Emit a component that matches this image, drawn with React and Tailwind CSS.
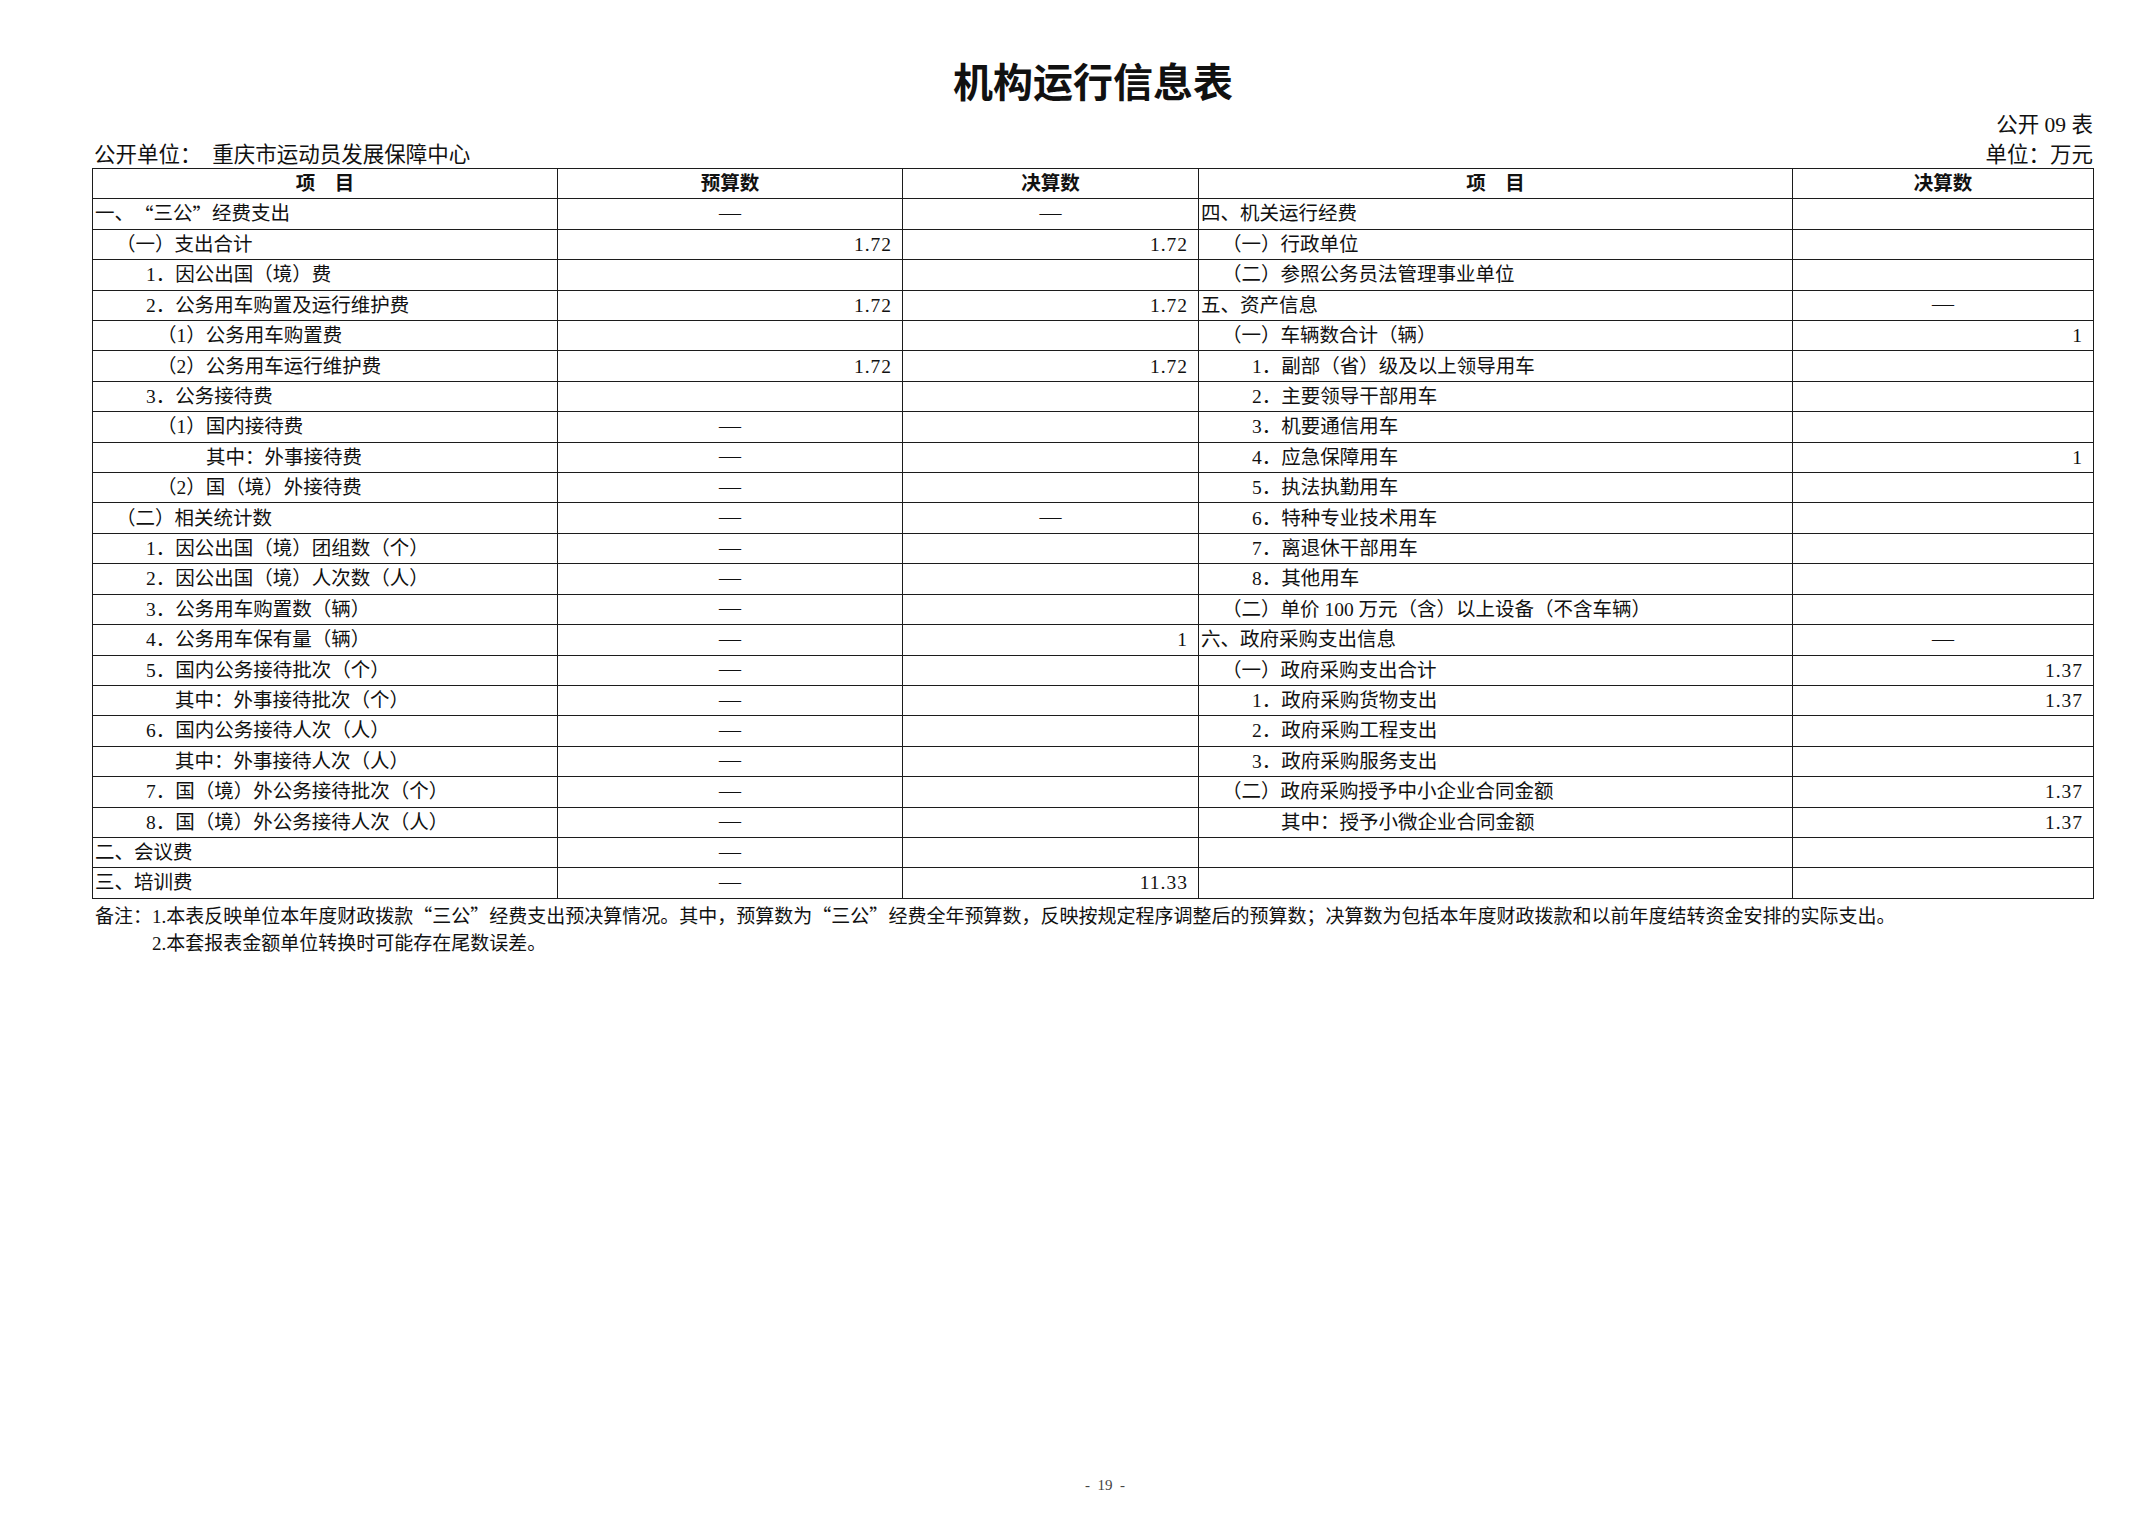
import React from 'react';

// 机构运行信息表 — 公开09表
const cjk = "font-['Noto_Sans_CJK_SC',sans-serif]";

const indents = ['pl-[2px]', 'pl-[23px]', 'pl-[53px]', 'pl-[64px]', 'pl-[113px]', 'pl-[82px]'];

const leftRows = [
  ['一、“三公”经费支出', 0, '—', '—'],
  ['（一）支出合计', 1, '1.72', '1.72'],
  ['1．因公出国（境）费', 2, '', ''],
  ['2．公务用车购置及运行维护费', 2, '1.72', '1.72'],
  ['（1）公务用车购置费', 3, '', ''],
  ['（2）公务用车运行维护费', 3, '1.72', '1.72'],
  ['3．公务接待费', 2, '', ''],
  ['（1）国内接待费', 3, '—', ''],
  ['其中：外事接待费', 4, '—', ''],
  ['（2）国（境）外接待费', 3, '—', ''],
  ['（二）相关统计数', 1, '—', '—'],
  ['1．因公出国（境）团组数（个）', 2, '—', ''],
  ['2．因公出国（境）人次数（人）', 2, '—', ''],
  ['3．公务用车购置数（辆）', 2, '—', ''],
  ['4．公务用车保有量（辆）', 2, '—', '1'],
  ['5．国内公务接待批次（个）', 2, '—', ''],
  ['其中：外事接待批次（个）', 5, '—', ''],
  ['6．国内公务接待人次（人）', 2, '—', ''],
  ['其中：外事接待人次（人）', 5, '—', ''],
  ['7．国（境）外公务接待批次（个）', 2, '—', ''],
  ['8．国（境）外公务接待人次（人）', 2, '—', ''],
  ['二、会议费', 0, '—', ''],
  ['三、培训费', 0, '—', '11.33'],
];

const rightRows = [
  ['四、机关运行经费', 0, ''],
  ['（一）行政单位', 1, ''],
  ['（二）参照公务员法管理事业单位', 1, ''],
  ['五、资产信息', 0, '—'],
  ['（一）车辆数合计（辆）', 1, '1'],
  ['1．副部（省）级及以上领导用车', 2, ''],
  ['2．主要领导干部用车', 2, ''],
  ['3．机要通信用车', 2, ''],
  ['4．应急保障用车', 2, '1'],
  ['5．执法执勤用车', 2, ''],
  ['6．特种专业技术用车', 2, ''],
  ['7．离退休干部用车', 2, ''],
  ['8．其他用车', 2, ''],
  ['（二）单价 100 万元（含）以上设备（不含车辆）', 1, ''],
  ['六、政府采购支出信息', 0, '—'],
  ['（一）政府采购支出合计', 1, '1.37'],
  ['1．政府采购货物支出', 2, '1.37'],
  ['2．政府采购工程支出', 2, ''],
  ['3．政府采购服务支出', 2, ''],
  ['（二）政府采购授予中小企业合同金额', 1, '1.37'],
  ['其中：授予小微企业合同金额', 5, '1.37'],
  ['', 0, ''],
  ['', 0, ''],
];

// Chinese curly quotes should be full width, so give them the CJK face
const Txt = ({ s }) =>
  s.split(/([“”])/).map((part, i) =>
    part === '“' || part === '”' ? (
      <span key={i} className={cjk}>{part}</span>
    ) : (
      <React.Fragment key={i}>{part}</React.Fragment>
    )
  );

const cell = 'h-[30.42px] border-r border-b border-[#1c1c1c] flex items-center whitespace-nowrap overflow-hidden';

const LabelCell = ({ text, level }) => (
  <div className={`${cell} ${indents[level]}`}>
    <Txt s={text} />
  </div>
);

const ValueCell = ({ v }) => {
  if (v === '—') {
    return (
      <div className={`${cell} justify-center`}>
        <span className="text-[22px] leading-none relative top-[-1px]">—</span>
      </div>
    );
  }
  return <div className={`${cell} justify-end pr-[10px] tracking-[1px]`}>{v}</div>;
};

const HeadCell = ({ children }) => (
  <div className={`${cell} justify-center font-bold`}>{children}</div>
);

export default function App() {
  return (
    <div className="w-[2149px] h-[1520px] bg-white text-[#111] font-['Liberation_Serif','Noto_Sans_CJK_SC',serif] text-[19.5px] flex flex-col">
      <div className="ml-[92px] w-[2002px]">
        <h1 className={`pt-[60px] h-[100px] leading-[40px] text-[40px] font-bold text-center ${cjk}`}>
          机构运行信息表
        </h1>
        <div className="mt-[11px] h-[28px] leading-[29px] text-[21.5px] text-right pr-[1px]">公开 09 表</div>
        <div className="h-[29px] leading-[33px] text-[21.5px] flex justify-between pl-[2px] pr-[1px]">
          <span>公开单位：　重庆市运动员发展保障中心</span>
          <span>单位：万元</span>
        </div>

        <div className="grid grid-cols-[465px_345px_296px_594px_301px] border-l border-t border-[#1c1c1c]">
          <HeadCell>项　目</HeadCell>
          <HeadCell>预算数</HeadCell>
          <HeadCell>决算数</HeadCell>
          <HeadCell>项　目</HeadCell>
          <HeadCell>决算数</HeadCell>
          {leftRows.map((row, i) => {
            const r = rightRows[i];
            return (
              <React.Fragment key={i}>
                <LabelCell text={row[0]} level={row[1]} />
                <ValueCell v={row[2]} />
                <ValueCell v={row[3]} />
                <LabelCell text={r[0]} level={r[1]} />
                <ValueCell v={r[2]} />
              </React.Fragment>
            );
          })}
        </div>

        <div className="mt-[2px] text-[19px] leading-[27px] pl-[3px]">
          <p>
            备注：1.本表反映单位本年度财政拨款<span className={cjk}>“</span>三公<span className={cjk}>”</span>经费支出预决算情况。其中，预算数为<span className={cjk}>“</span>三公<span className={cjk}>”</span>经费全年预算数，反映按规定程序调整后的预算数；决算数为包括本年度财政拨款和以前年度结转资金安排的实际支出。
          </p>
          <p className="pl-[57px]">2.本套报表金额单位转换时可能存在尾数误差。</p>
        </div>
      </div>

      <div className="mt-auto mb-[25px] ml-[92px] w-[2002px] pl-[24px] text-center text-[15px] text-[#444] leading-[20px]">
        -&nbsp;&nbsp;19&nbsp;&nbsp;-
      </div>
    </div>
  );
}
